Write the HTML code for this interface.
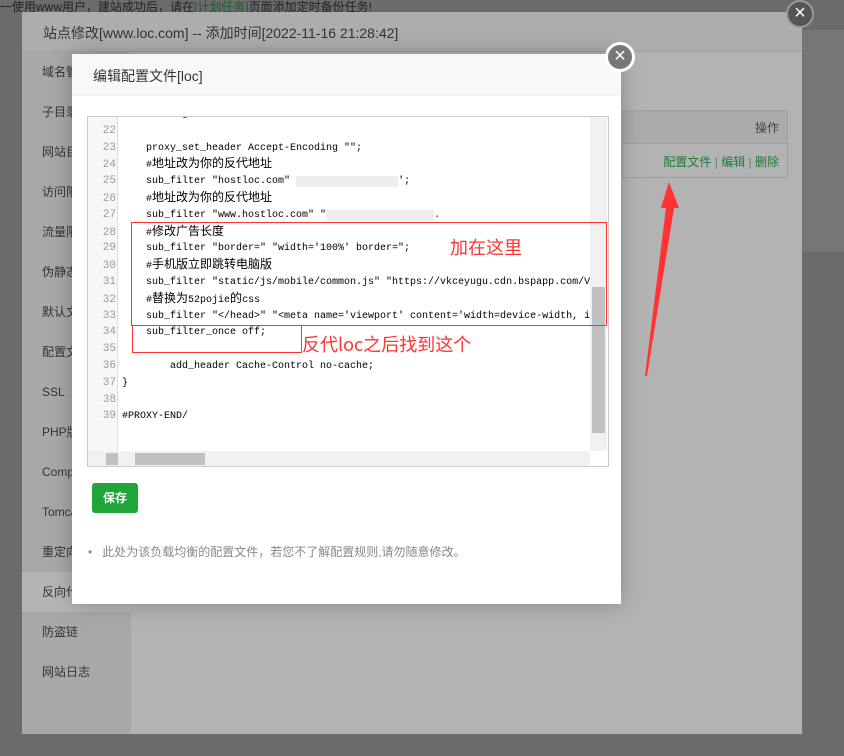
<!DOCTYPE html>
<html><head><meta charset="utf-8">
<style>
*{margin:0;padding:0;box-sizing:border-box}
body{width:844px;height:756px;overflow:hidden;background:#6b6b6b;font-family:"Liberation Sans","Noto Sans CJK SC",sans-serif;position:relative}
.abs{position:absolute}
.top{left:0;top:-2px;font-size:12px;color:#222;white-space:nowrap}
.outer{left:22px;top:12px;width:780px;height:722px;background:#b3b3b3}
.ohead{left:0;top:0;width:780px;height:40px;background:#adadad;border-bottom:1px solid #a2a2a2;font-size:14px;color:#333;padding:11px 0 0 21px}
.side{left:0;top:40px;width:109px;height:682px;background:#a8a8a8}
.side div{height:40px;line-height:40px;padding-left:20px;font-size:12px;color:#333;white-space:nowrap;overflow:hidden}
.side .act{background:#b5b5b5}
.tbl{left:600px;top:98px;width:166px;height:68px;border:1px solid #a0a0a0;font-size:12px}
.tbl .h{height:33px;background:#ababab;border-bottom:1px solid #a0a0a0;text-align:right;padding:8px 8px 0 0;color:#444}
.tbl .r{text-align:right;padding:9px 8px 0 0;color:#207a34}
.tbl .r span{color:#777}
.close{border-radius:50%;background:#666;color:#fff;text-align:center;font-size:20px}
.inner{left:72px;top:54px;width:549px;height:550px;background:#fff;box-shadow:0 0 20px rgba(0,0,0,.25)}
.ihead{left:0;top:0;width:549px;height:42px;background:#f8f8f8;border-bottom:1px solid #eee;font-size:14px;color:#333;padding:12px 0 0 21px}
.ed{left:15px;top:62px;width:522px;height:351px;border:1px solid #ccc;overflow:hidden;background:#fff}
.gut{left:0;top:0;width:30px;height:334px;background:#f7f7f7;border-right:1px solid #ddd}
.lines{left:0;top:-11px;font-family:"Liberation Mono","Noto Sans CJK SC",monospace;font-size:10px;color:#000}
.lines div{height:16.8px;line-height:16.8px;white-space:pre;overflow:hidden}
.lines span{line-height:16.8px}
.ln{display:inline-block;width:28px;text-align:right;color:#999;margin-right:6px;font-size:11px}
.c{font-size:12px}
.vs{left:502px;top:0;width:17px;height:334px;background:#f0f0f0}
.hs{left:0;top:334px;width:502px;height:16px;background:#f0f0f0}
.red{border:1px solid #f33}
.note{color:#f33;font-size:18px;font-family:"Noto Sans CJK SC",sans-serif;line-height:24px}
.btn{left:20px;top:429px;width:46px;height:30px;background:#20a53a;border-radius:3px;color:#fff;font-size:12px;font-weight:bold;text-align:center;line-height:30px}
.tip{left:16px;top:489px;font-size:12px;color:#888}
</style></head><body>
<div class="abs top">一使用www用户，建站成功后，请在<span style="color:#1a5e2a">[计划任务]</span>页面添加定时备份任务!</div>
<div class="abs" style="left:802px;top:30px;width:42px;height:222px;background:#767676"></div>
<div class="abs outer">
 <div class="abs ohead">站点修改[www.loc.com] -- 添加时间[2022-11-16 21:28:42]</div>
 <div class="abs side">
  <div>域名管理</div><div>子目录绑定</div><div>网站目录</div><div>访问限制</div><div>流量限制</div><div>伪静态</div><div>默认文档</div><div>配置文件</div><div>SSL</div><div>PHP版本</div><div>Composer</div><div>Tomcat</div><div>重定向</div><div class="act">反向代理</div><div>防盗链</div><div>网站日志</div>
 </div>
 <div class="abs tbl"><div class="h">操作</div><div class="r">配置文件 <span>|</span> 编辑 <span>|</span> 删除</div></div>
</div>
<div class="abs close" style="left:786px;top:0;width:28px;height:28px;border:2px solid #999;line-height:23px;background:#555">×</div>
<svg class="abs" style="left:630px;top:170px" width="60" height="220"><polygon points="39,12 31,38 36,38 15,206 17,206 44,38 49,38" fill="#f33"/></svg>
<div class="abs inner">
 <div class="abs ihead">编辑配置文件[loc]</div>
 <div class="abs ed">
  <div class="abs gut"></div>
  <div class="abs lines"><div><span class="ln">21</span>    #set-agent-Judi</div><div><span class="ln">22</span></div><div><span class="ln">23</span>    proxy_set_header Accept-Encoding "";</div><div><span class="ln">24</span>    #<span class="c">地址改为你的反代地址</span></div><div><span class="ln">25</span>    sub_filter "hostloc.com" <span style="background:#eee;color:#eee">'xxxxxxxxxxxxxxxx</span>';</div><div><span class="ln">26</span>    #<span class="c">地址改为你的反代地址</span></div><div><span class="ln">27</span>    sub_filter "www.hostloc.com" "<span style="background:#eee;color:#eee">xxxxxxxxxxxxxxxxxx</span>.</div><div><span class="ln">28</span>    #<span class="c">修改广告长度</span></div><div><span class="ln">29</span>    sub_filter "border=" "width='100%' border=";</div><div><span class="ln">30</span>    #<span class="c">手机版立即跳转电脑版</span></div><div><span class="ln">31</span>    sub_filter "static/js/mobile/common.js" "https://vkceyugu.cdn.bspapp.com/V</div><div><span class="ln">32</span>    #<span class="c">替换为</span>52pojie<span class="c">的</span>css</div><div><span class="ln">33</span>    sub_filter "&lt;/head&gt;" "&lt;meta name='viewport' content='width=device-width, i</div><div><span class="ln">34</span>    sub_filter_once off;</div><div><span class="ln">35</span></div><div><span class="ln">36</span>        add_header Cache-Control no-cache;</div><div><span class="ln">37</span>}</div><div><span class="ln">38</span></div><div><span class="ln">39</span>#PROXY-END/</div></div>
  <div class="abs vs"><div class="abs" style="left:2px;top:170px;width:13px;height:146px;background:#c1c1c1"></div></div>
  <div class="abs hs"><div class="abs" style="left:18px;top:2px;width:12px;height:12px;background:#c1c1c1"></div><div class="abs" style="left:47px;top:2px;width:70px;height:12px;background:#c1c1c1"></div></div>
  <div class="abs red" style="left:43px;top:105px;width:476px;height:104px"></div>
  <div class="abs red" style="left:44px;top:208px;width:170px;height:28px"></div>
 </div>
 <div class="abs note" style="left:378px;top:181px">加在这里</div>
 <div class="abs note" style="left:230px;top:278px">反代loc之后找到这个</div>
 <div class="abs btn">保存</div>
 <div class="abs tip">•&nbsp;&nbsp;&nbsp;此处为该负载均衡的配置文件，若您不了解配置规则,请勿随意修改。</div>
</div>
<div class="abs close" style="left:605px;top:42px;width:30px;height:30px;border:3px solid #fff;line-height:23px;background:#777">×</div>
</body></html>
